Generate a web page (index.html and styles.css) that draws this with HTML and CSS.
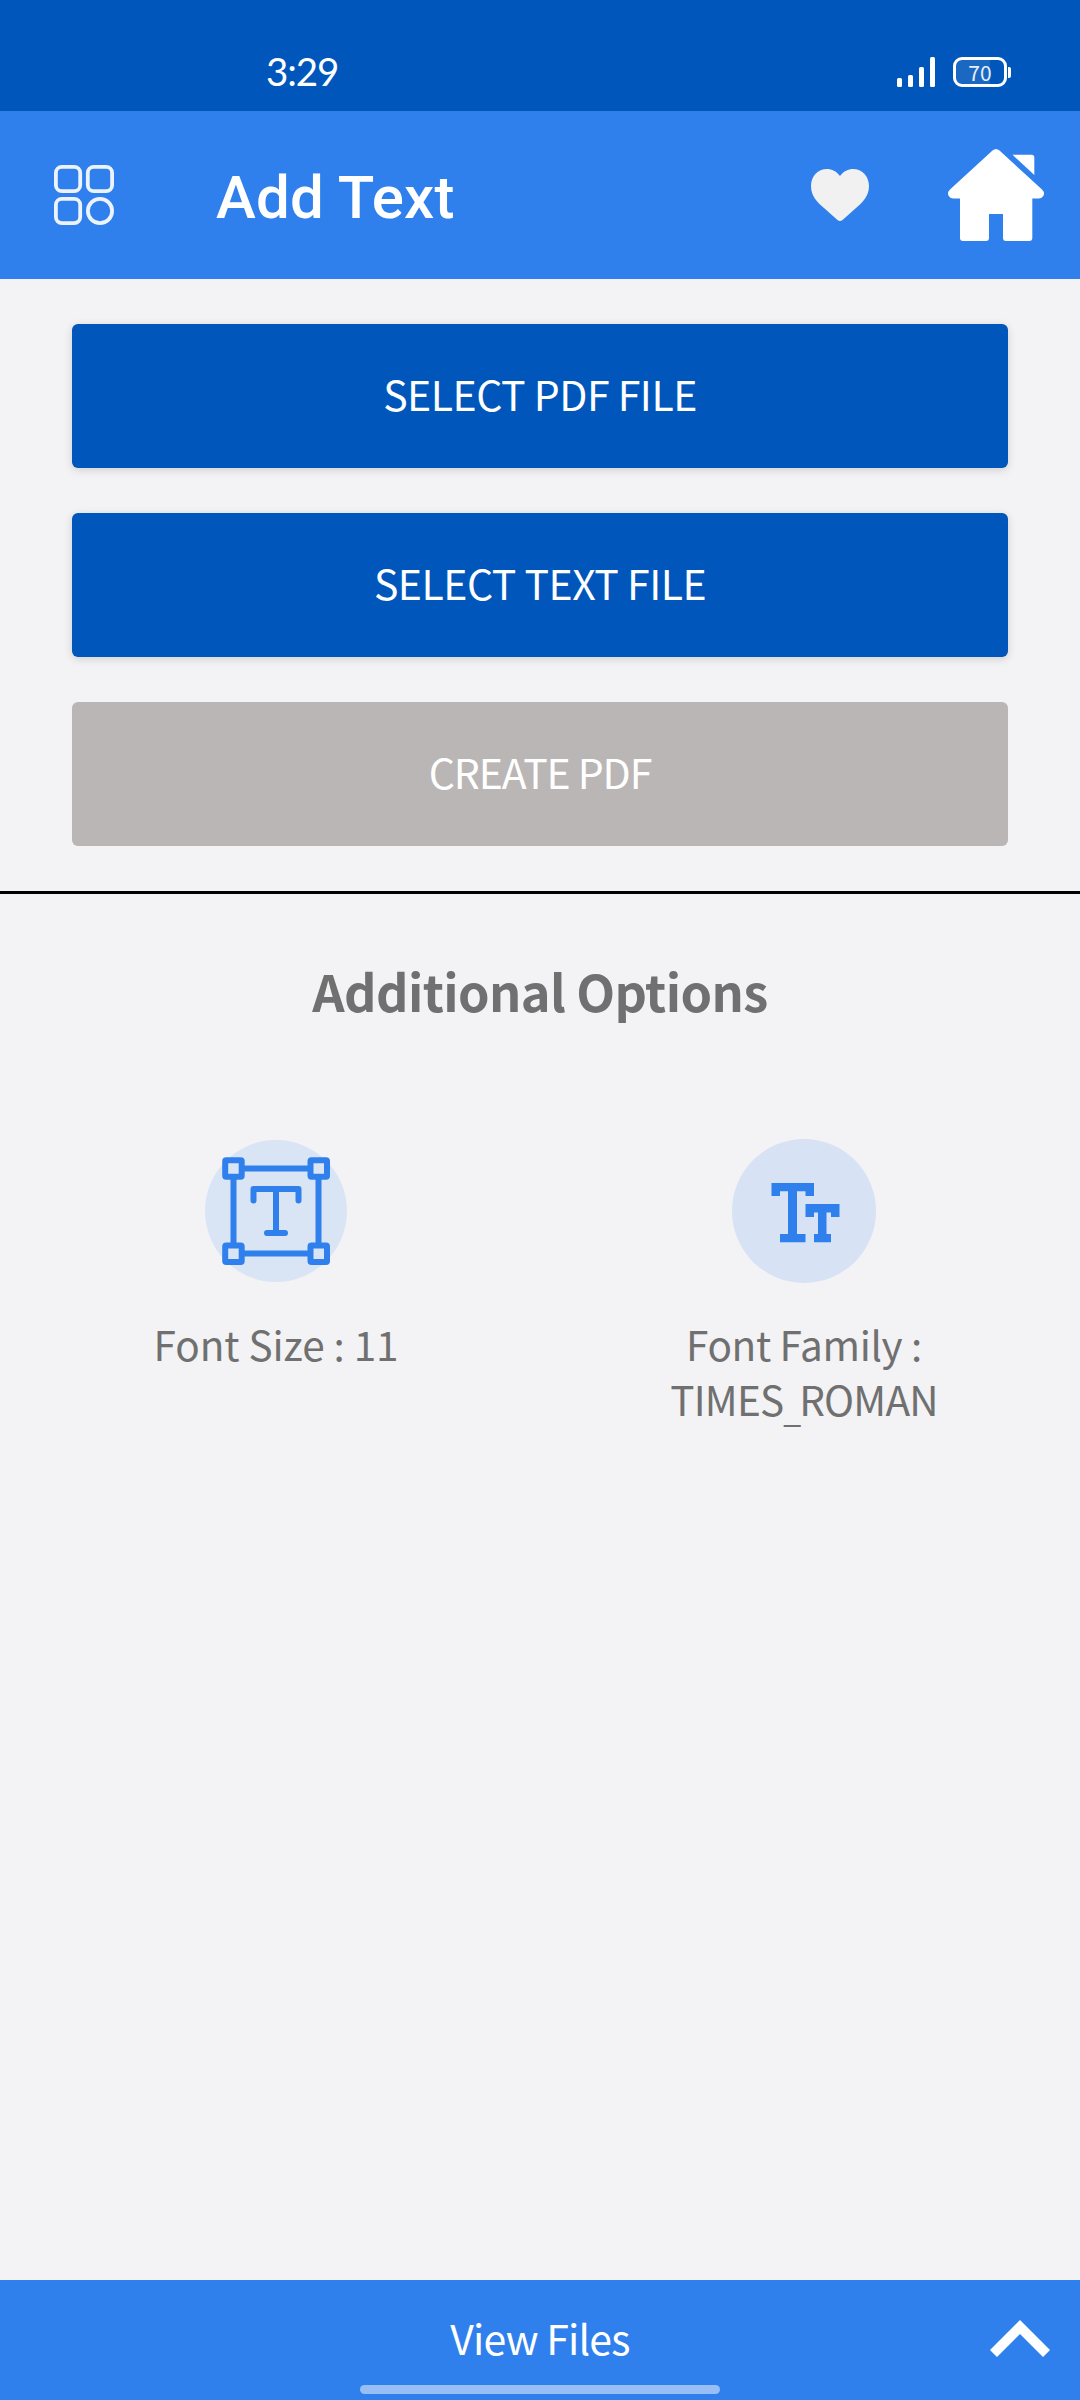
FILE: index.html
```html
<!DOCTYPE html>
<html lang="en">
<head>
<meta charset="utf-8">
<title>Add Text</title>
<link rel="stylesheet" href="styles.css">
</head>
<body>
<div class="screen">
  <div class="status-bar">
    <span class="clock">3:29</span>
    <div class="status-icons">
      <svg class="signal" viewBox="0 0 38 30" fill="#fff">
        <rect x="0" y="21" width="5" height="9" rx="1.5"/>
        <rect x="11" y="18" width="5" height="12" rx="1.5"/>
        <rect x="22" y="10" width="5" height="20" rx="1.5"/>
        <rect x="33" y="0" width="5" height="30" rx="1.5"/>
      </svg>
      <div class="battery">
        <span class="battery-level">70</span>
      </div>
      <span class="battery-tip"></span>
    </div>
  </div>

  <header class="app-bar">
    <svg class="menu-icon" viewBox="0 0 60 60" fill="none" stroke="#ecf3fd" stroke-width="3.8">
      <rect x="1.900" y="1.900" width="24.300" height="24.300" rx="6"/>
      <rect x="33.800" y="1.900" width="24.300" height="24.300" rx="6"/>
      <rect x="1.900" y="33.800" width="24.300" height="24.300" rx="6"/>
      <circle cx="46" cy="46" r="12.100"/>
    </svg>
    <h1 class="title">Add Text</h1>
    <svg class="heart-icon" viewBox="0 0 58 52" fill="#f1f1f1">
      <path d="M29 7C25 2 21 0 16 0C7 0 0 7 0 17C0 27 6 33 13 39L26.500 51Q29 53 31.500 51L45 39C52 33 58 27 58 17C58 7 51 0 42 0C37 0 33 2 29 7Z"/>
    </svg>
    <svg class="home-icon" viewBox="0 0 96 92" fill="#fff">
      <path d="M44.500 1.500Q48 -1.500 51.500 1.500L94 40.500Q97 43.500 95.500 46.500Q94 49.500 90.500 49.500H84.300V89Q84.300 92 81.300 92H58Q55 92 55 89V65H41V89Q41 92 38 92H15Q12 92 12 89V49.500H5.500Q2 49.500 .5 46.500Q-1 43.500 2 40.500Z"/>
      <path d="M64.500 5.800H83.500Q86.300 5.800 86.300 8.600V26Z"/>
    </svg>
  </header>

  <main class="content">
    <div class="actions">
      <button class="btn">SELECT PDF FILE</button>
      <button class="btn">SELECT TEXT FILE</button>
      <button class="btn btn-create" disabled>CREATE PDF</button>
    </div>

    <h2 class="heading">Additional Options</h2>

    <div class="options">
      <div class="option">
        <svg class="option-icon" viewBox="0 0 144 144" fill="none" stroke="#2f80ed" stroke-width="6">
          <circle cx="72" cy="72" r="71" fill="#d9e5f5" stroke="none"/>
          <rect x="29.500" y="29.500" width="85" height="85"/>
          <g fill="#d9e5f5">
            <rect x="21.200" y="21.200" width="16.500" height="16.500" rx="1"/>
            <rect x="106.500" y="21.200" width="16.500" height="16.500" rx="1"/>
            <rect x="21.200" y="106.500" width="16.500" height="16.500" rx="1"/>
            <rect x="106.500" y="106.500" width="16.500" height="16.500" rx="1"/>
          </g>
          <path d="M49.500 61.500V50H94.500V61.500M72 50V94M63 94H81" stroke-linecap="round" stroke-linejoin="round"/>
        </svg>
        <p class="option-label label-size">Font Size : 11</p>
      </div>
      <div class="option">
        <svg class="option-icon" viewBox="0 0 144 144">
          <circle cx="72" cy="72" r="72" fill="#d7e2f4"/>
          <path fill="#2f80ed" d="M39.500 44H82V57H73.500V52.200H65V95H73.500V103.200H48V95H56V52.200H48V57H39.500Z"/>
          <path fill="#2f80ed" d="M73.500 65H107.500V78H99V73.500H94.500V95H99V103.200H82V95H86V73.500H82V78H73.500Z"/>
        </svg>
        <p class="option-label">Font Family :<br><span class="family-name">TIMES<span class="underscore">_</span>ROMAN</span></p>
      </div>
    </div>
  </main>

  <footer class="bottom-bar">
    <span class="view-files">View Files</span>
    <svg class="chevron" viewBox="0 0 60 37" fill="#fff">
      <path d="M30 0L60 30L53 37L30 14L7 37L0 30Z"/>
    </svg>
    <span class="home-indicator"></span>
  </footer>
</div>
</body>
</html>
```
FILE: styles.css
```css
* {
  box-sizing: border-box;
}

body {
  margin: 0;
  background: #f3f4f6;
  font-family: "Noto Sans CJK SC", "Noto Sans", sans-serif;
}

h1, h2, p {
  margin: 0;
}

.screen {
  display: flex;
  flex-direction: column;
  width: 1080px;
  height: 2400px;
  overflow: hidden;
}

.status-bar {
  display: flex;
  justify-content: space-between;
  align-items: center;
  height: 111px;
  padding: 33px 69px 0 266px;
  background: #0056ba;
  color: #fff;
}

.clock {
  font: 400 38.5px/50px Lato, sans-serif;
  letter-spacing: -1.1px;
  padding-bottom: 3px;
}

.status-icons {
  display: flex;
  align-items: center;
}

.signal {
  width: 38px;
  height: 30px;
  margin-right: 18px;
}

.battery {
  width: 54px;
  height: 30px;
  border: 3px solid #fff;
  border-radius: 9px;
  background: linear-gradient(90deg, #1b68c2 34px, transparent 34px);
  text-align: center;
}

.battery-level {
  display: block;
  font: 400 21px/24px "Noto Sans CJK SC", sans-serif;
  color: #e6effa;
}

.battery-tip {
  width: 3px;
  height: 11px;
  margin-left: 1px;
  border-radius: 0 2px 2px 0;
  background: #fff;
}

.app-bar {
  display: flex;
  align-items: center;
  height: 168px;
  padding: 0 36px 0 54px;
  background: #2f80ed;
}

.menu-icon {
  width: 60px;
  height: 60px;
}

.title {
  flex: 1;
  margin-left: 102px;
  padding-top: 5px;
  font: 500 60px/72px Roboto, sans-serif;
  letter-spacing: 0.2px;
  color: #fff;
}

.heart-icon {
  width: 58px;
  height: 52px;
  margin-right: 79px;
}

.home-icon {
  width: 96px;
  height: 92px;
}

.content {
  flex: 1;
  background: #f3f3f6;
}

.actions {
  display: flex;
  flex-direction: column;
  gap: 45px;
  padding: 45px 72px;
  border-bottom: 3px solid #000;
}

.btn {
  height: 144px;
  padding: 0 0 6px;
  border: 0;
  border-radius: 6px;
  background: #0056ba;
  box-shadow: 0 2px 8px rgba(0, 0, 0, 0.15);
  color: #fff;
  font: inherit;
  font-size: 41px;
  line-height: 60px;
  letter-spacing: -0.5px;
}

.btn-create {
  background: #bab6b5;
  box-shadow: none;
  letter-spacing: -1.1px;
}

.heading {
  margin-top: 66px;
  font-size: 50.5px;
  font-weight: 700;
  line-height: 60px;
  letter-spacing: -0.6px;
  text-align: center;
  color: #707070;
}

.options {
  display: grid;
  grid-template-columns: 1fr 1fr;
  margin-top: 119px;
  padding: 0 12px;
}

.option {
  display: flex;
  flex-direction: column;
  align-items: center;
}

.option-icon {
  width: 144px;
  height: 144px;
}

.option-label {
  margin-top: 33px;
  font-size: 40.5px;
  line-height: 55px;
  text-align: center;
  letter-spacing: -0.35px;
  color: #707070;
}

.label-size {
  letter-spacing: -0.1px;
}

.family-name {
  letter-spacing: -0.8px;
}

.underscore {
  display: inline-block;
  font-size: 32px;
  line-height: 40px;
  letter-spacing: -2px;
  transform: translateY(6px);
}

.bottom-bar {
  display: grid;
  grid-template-columns: 90px 1fr 60px;
  grid-template-rows: 105px 9px;
  justify-items: center;
  height: 120px;
  padding-right: 30px;
  background: #2f80ed;
  color: #fff;
}

.view-files {
  grid-column: 2;
  margin-top: 27px;
  font-size: 41px;
  line-height: 60px;
  letter-spacing: -0.8px;
}

.chevron {
  width: 60px;
  height: 37px;
  margin-top: 40px;
}

.home-indicator {
  grid-column: 2;
  width: 360px;
  height: 9px;
  border-radius: 5px;
  background: #97bff6;
}
```
